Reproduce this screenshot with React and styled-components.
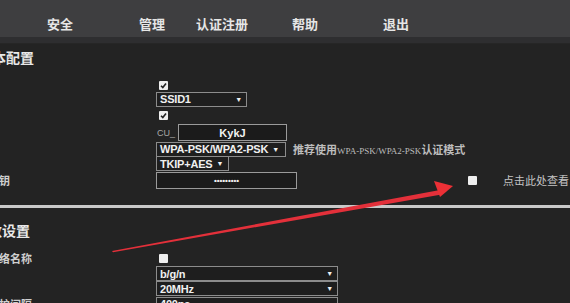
import React from 'react'
import styled, { createGlobalStyle } from 'styled-components'

const GlobalStyle = createGlobalStyle`
  html, body {
    margin: 0;
    padding: 0;
    background: #232323;
    overflow: hidden;
  }
  body {
    font-family: 'Liberation Sans', Arial, 'Noto Sans CJK SC', sans-serif;
  }
`

const Page = styled.div`
  position: relative;
  width: 570px;
  height: 303px;
  overflow: hidden;
  background: #232323;
`

const NavBar = styled.div`
  height: 37px;
  display: flex;
  align-items: center;
  padding-left: 47px;
  background: #3e3e40;
  border-bottom: 6px solid #2e2e30;
  box-shadow: 0 1px 0 #262626;
`

const NavItem = styled.div`
  flex: 0 0 ${({ $w }) => ($w ? `${$w}px` : 'auto')};
  color: #e6e6e6;
  font-family: 'Noto Sans CJK SC', sans-serif;
  font-size: 13px;
  font-weight: 700;
  line-height: 1;
  padding-top: 9px;
`

const Content = styled.div`
  margin-left: -12px;
`

const Row = styled.div`
  display: grid;
  grid-template-columns: 168px 1fr;
  align-items: center;
  height: ${({ $h }) => $h}px;
`

const SectionTitle = styled.div`
  height: ${({ $h }) => $h}px;
  display: flex;
  align-items: center;
  margin-left: ${({ $indent }) => $indent}px;
  padding-top: ${({ $pt }) => $pt || 0}px;
  box-sizing: border-box;
  color: #e8e8e8;
  font-family: 'Noto Sans CJK SC', sans-serif;
  font-size: 14px;
  font-weight: 700;
`

const Label = styled.div`
  color: #cfcfcf;
  font-family: 'Noto Sans CJK SC', sans-serif;
  font-size: 11px;
  font-weight: 700;
  white-space: nowrap;
`

const Field = styled.div`
  display: flex;
  align-items: center;
  height: 100%;
`

const Box = styled.span`
  display: inline-flex;
  align-items: center;
  justify-content: center;
  width: 9px;
  height: 9px;
  margin-left: 3px;
  background: #eeeeee;
  border-radius: 1px;
`

const Select = styled.div`
  box-sizing: border-box;
  width: ${({ $w }) => $w}px;
  height: ${({ $h }) => $h || 15}px;
  display: flex;
  align-items: center;
  justify-content: ${({ $tight }) => ($tight ? 'flex-start' : 'space-between')};
  gap: 4px;
  padding: 0 4px 0 3px;
  border: 1.5px solid #8c8c8c;
  background: #1e1e1e;
  color: #f0f0f0;
  font-size: 11px;
  font-weight: 700;
  letter-spacing: -0.2px;
`

const Arrow = styled.span`
  font-size: 7px;
  color: #f0f0f0;
`

const Stack = styled.div`
  display: flex;
  flex-direction: column;
  margin-left: 168px;
`

const Small = styled.span`
  color: #a8a8a8;
  font-size: 9px;
  width: 21px;
  padding-left: 1px;
`

const Input = styled.div`
  box-sizing: border-box;
  width: ${({ $w }) => $w}px;
  height: ${({ $h }) => $h}px;
  display: flex;
  align-items: center;
  justify-content: center;
  border: 1.5px solid #9a9a9a;
  background: #1b1b1b;
  color: #f2f2f2;
  font-size: ${({ $fs }) => $fs || 11}px;
  font-weight: 700;
`

const Hint = styled.span`
  margin-left: 7px;
  color: #bdbdbd;
  font-family: 'Noto Sans CJK SC', sans-serif;
  font-size: 11px;
  font-weight: 700;
  white-space: nowrap;

  em {
    font-style: normal;
    font-family: 'Liberation Serif', serif;
    font-size: 9px;
    font-weight: 400;
  }
`

const Reveal = styled.div`
  display: flex;
  align-items: center;
  margin-left: 168px;
  gap: 26px;
`

const Note = styled.span`
  color: #c4c4c4;
  font-family: 'Noto Sans CJK SC', sans-serif;
  font-size: 11px;
  white-space: nowrap;
`

const Rule = styled.div`
  margin-top: 16px;
  height: 3px;
  background: #c9c9c9;
`

const ArrowLayer = styled.svg`
  position: absolute;
  left: 0;
  top: 0;
  pointer-events: none;
`

function Check({ checked }) {
  return (
    <Box>
      {checked && (
        <svg width="7" height="7" viewBox="0 0 7 7">
          <path d="M1 3.8 L2.8 5.6 L6 1.4" stroke="#222" strokeWidth="1.6" fill="none" />
        </svg>
      )}
    </Box>
  )
}

export default function App() {
  return (
    <Page>
      <GlobalStyle />
      <NavBar>
        <NavItem $w={92}>安全</NavItem>
        <NavItem $w={57}>管理</NavItem>
        <NavItem $w={96}>认证注册</NavItem>
        <NavItem $w={91}>帮助</NavItem>
        <NavItem>退出</NavItem>
      </NavBar>

      <Content>
        <SectionTitle $h={28} $indent={-10}>基本配置</SectionTitle>
        <Row $h={8} />
        <Row $h={12}>
          <span />
          <Field><Check checked /></Field>
        </Row>
        <Row $h={16}>
          <span />
          <Field><Select $w={91}>SSID1<Arrow>▼</Arrow></Select></Field>
        </Row>
        <Row $h={17}>
          <span />
          <Field><Check checked /></Field>
        </Row>
        <Row $h={17}>
          <span />
          <Field>
            <Small>CU_</Small>
            <Input $w={109} $h={17}>KykJ</Input>
          </Field>
        </Row>
        <Row $h={15}>
          <span />
          <Field>
            <Select $w={130} $tight>WPA-PSK/WPA2-PSK<Arrow>▼</Arrow></Select>
            <Hint>推荐使用<em>WPA-PSK/WPA2-PSK</em>认证模式</Hint>
          </Field>
        </Row>
        <Row $h={15}>
          <span />
          <Field><Select $w={73} $tight>TKIP+AES<Arrow>▼</Arrow></Select></Field>
        </Row>
        <Row $h={18}>
          <Label>密钥</Label>
          <Field>
            <Input $w={141} $h={17} $fs={8}>•••••••••</Input>
            <Reveal>
              <Box />
              <Note>点击此处查看</Note>
            </Reveal>
          </Field>
        </Row>
      </Content>

      <Rule />

      <Content>
        <SectionTitle $h={42} $pt={2} $indent={-14}>参数设置</SectionTitle>
        <Row $h={12}>
          <Label>网络名称</Label>
          <Field><Check /></Field>
        </Row>
        <Row $h={4} />
        <Stack>
          <Select $w={182}>b/g/n<Arrow>▼</Arrow></Select>
          <Select $w={182}>20MHz<Arrow>▼</Arrow></Select>
        </Stack>
        <Row $h={15}>
          <Label>保护间隔:</Label>
          <Field><Select $w={182}>400ns<Arrow>▼</Arrow></Select></Field>
        </Row>
      </Content>

      <ArrowLayer width="570" height="303" viewBox="0 0 570 303">
        <path d="M112 251 L440 190 L441.5 194.5 L113 252.2 Z" fill="#e3303a" />
        <path d="M453 186 L434 181 L440 197 Z" fill="#ec3036" />
      </ArrowLayer>
    </Page>
  )
}
